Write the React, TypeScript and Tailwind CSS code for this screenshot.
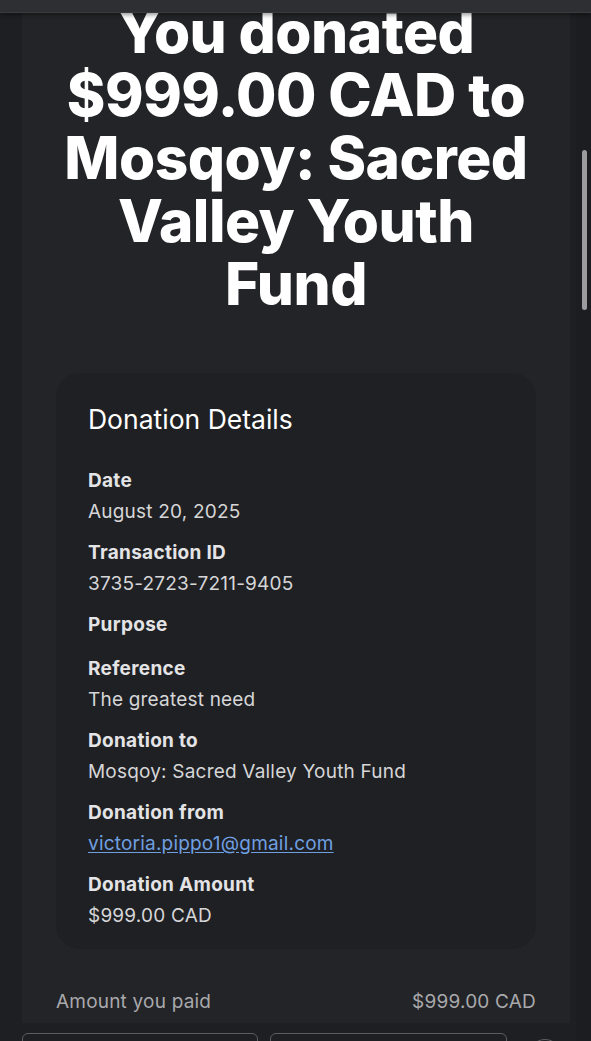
import React from "react";

const rows = [
  { label: "Date", value: "August 20, 2025" },
  { label: "Transaction ID", value: "3735-2723-7211-9405" },
  { label: "Purpose", value: "" },
  { label: "Reference", value: "The greatest need" },
  { label: "Donation to", value: "Mosqoy: Sacred Valley Youth Fund" },
  { label: "Donation from", value: "victoria.pippo1@gmail.com", link: true },
  { label: "Donation Amount", value: "$999.00 CAD" },
];

export default function App() {
  return (
    <div
      className="relative w-[591px] h-[1041px] overflow-hidden bg-[#1e1f22]"
      style={{ fontFamily: "Inter, 'Noto Sans', sans-serif" }}
    >
      {/* top browser bar */}
      <div className="absolute top-0 left-0 right-0 h-[13px] bg-[#2e2f33] border-b border-[#3a3b3f] shadow-[0_2px_4px_rgba(0,0,0,0.4)] z-10" />

      {/* scrollbar */}
      <div className="absolute top-0 bottom-0 right-0 w-[15px] bg-[#1c1d20]">
        <div className="absolute left-[6px] top-[150px] w-[5px] h-[160px] rounded-full bg-[#9c9c9e]" />
      </div>

      <div className="flex flex-col pl-[22px] pr-[21px]">
        <div className="bg-[#232427] flex flex-col items-center">
          <h1 className="mt-[0px] w-[480px] text-center text-white font-extrabold text-[58.5px] leading-[63px] tracking-[-0.5px]">
            You donated $999.00 CAD to Mosqoy: Sacred Valley Youth Fund
          </h1>

          <div className="mt-[58px] w-[480px] rounded-[24px] bg-[#1f2023] pl-[32px] pr-[33px] pt-[30px] pb-[18px]">
            <h2 className="text-[26.5px] leading-[32px] text-white mb-[30px]">Donation Details</h2>
            <div className="flex flex-col gap-[10px]">
              {rows.map((r) => (
                <div key={r.label} className="flex flex-col">
                  <div className="text-[19px] leading-[31px] font-bold tracking-[0.3px] text-[#e4e4e6]">{r.label}</div>
                  {r.value ? (
                    r.link ? (
                      <a className="text-[19px] leading-[31px] tracking-[0.2px] text-[#6f9fe0] underline underline-offset-2">
                        {r.value}
                      </a>
                    ) : (
                      <div className="text-[19px] leading-[31px] tracking-[0.2px] text-[#d6d6d8]">{r.value}</div>
                    )
                  ) : (
                    <div className="h-[3px]" />
                  )}
                </div>
              ))}
            </div>
          </div>

          <div className="w-[480px] flex justify-between mt-[37px] pb-[6px] text-[19px] leading-[31px] tracking-[0.2px] text-[#a9a9ac]">
            <span>Amount you paid</span>
            <span>$999.00 CAD</span>
          </div>
        </div>

        <div className="flex items-start gap-[12px] mt-[10px]">
          <div className="w-[236px] h-[40px] rounded-[6px] border border-[#5c5d61]" />
          <div className="w-[237px] h-[40px] rounded-[6px] border border-[#5c5d61]" />
          <div className="ml-[9px] mt-[6px] w-[34px] h-[34px] rounded-full border border-[#5c5d61]" />
        </div>
      </div>
    </div>
  );
}
